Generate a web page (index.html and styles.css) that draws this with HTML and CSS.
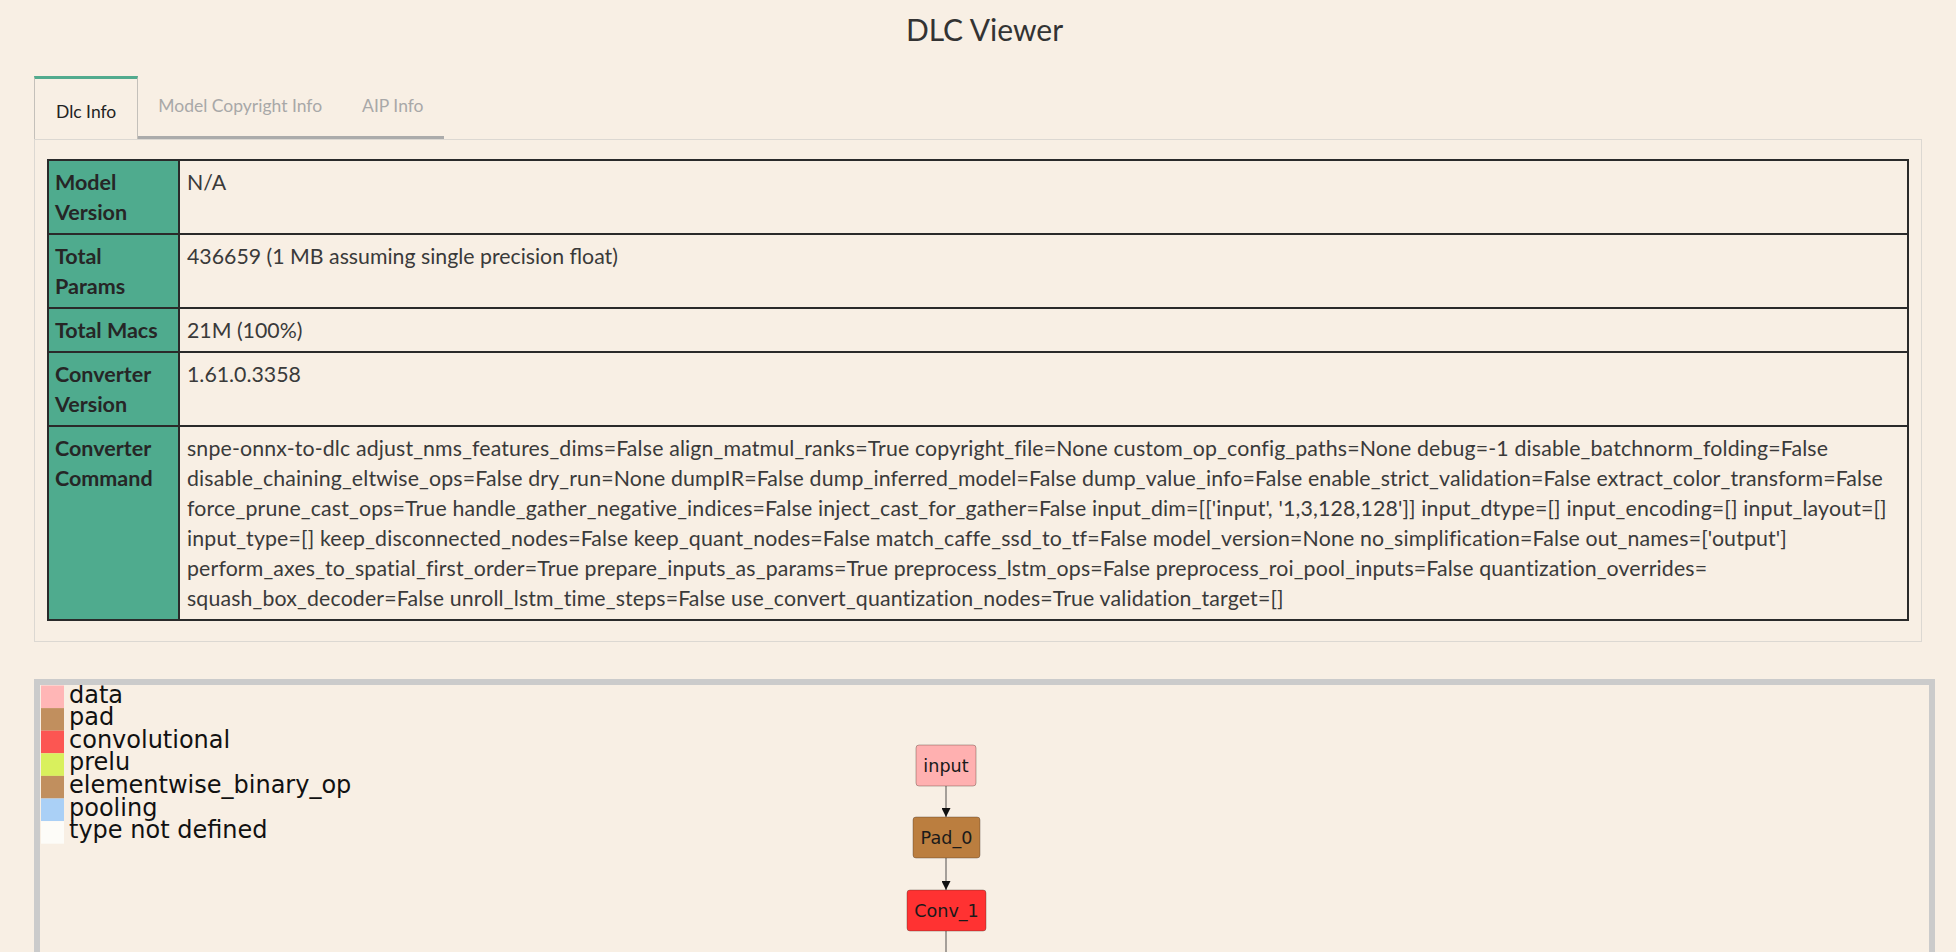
FILE: index.html
```html
<!DOCTYPE html>
<html lang="en">
<head>
<meta charset="utf-8">
<title>DLC Viewer</title>
<link rel="stylesheet" href="styles.css">
</head>
<body>
<div class="page">
  <h1 class="title">DLC Viewer</h1>
  <div class="info">
    <div class="tabs">
      <div class="tab tab-active">Dlc Info</div>
      <div class="tab">Model Copyright Info</div>
      <div class="tab">AIP Info</div>
    </div>
    <div class="panel">
      <table class="info-table">
        <colgroup><col class="col-head"><col></colgroup>
        <tr><th>Model Version</th><td>N/A</td></tr>
        <tr><th>Total Params</th><td>436659 (1 MB assuming single precision float)</td></tr>
        <tr><th>Total Macs</th><td>21M (100%)</td></tr>
        <tr><th>Converter Version</th><td>1.61.0.3358</td></tr>
        <tr><th>Converter Command</th><td class="cmd">snpe-onnx-to-dlc adjust_nms_features_dims=False align_matmul_ranks=True copyright_file=None custom_op_config_paths=None debug=-1 disable_batchnorm_folding=False<br>disable_chaining_eltwise_ops=False dry_run=None dumpIR=False dump_inferred_model=False dump_value_info=False enable_strict_validation=False extract_color_transform=False<br>force_prune_cast_ops=True handle_gather_negative_indices=False inject_cast_for_gather=False input_dim=[['input', '1,3,128,128']] input_dtype=[] input_encoding=[] input_layout=[]<br>input_type=[] keep_disconnected_nodes=False keep_quant_nodes=False match_caffe_ssd_to_tf=False model_version=None no_simplification=False out_names=['output']<br>perform_axes_to_spatial_first_order=True prepare_inputs_as_params=True preprocess_lstm_ops=False preprocess_roi_pool_inputs=False quantization_overrides=<br>squash_box_decoder=False unroll_lstm_time_steps=False use_convert_quantization_nodes=True validation_target=[]</td></tr>
      </table>
    </div>
  </div>
  <div class="graph">
    <svg class="graph-svg" width="1889" height="700" viewBox="0 0 1889 700">
      <defs>
        <marker id="arrow" viewBox="0 0 10 10" refX="10" refY="5" markerWidth="6" markerHeight="6" orient="auto">
          <path d="M0,0 L10,5 L0,10 z" fill="#111"/>
        </marker>
      </defs>
      <g class="legend">
        <rect x="1" y="0.5" width="23" height="22.6" fill="#ffb6b6"/>
        <text x="29" y="17.5">data</text>
        <rect x="1" y="23.1" width="23" height="22.6" fill="#c18f5e"/>
        <text x="29" y="40.1">pad</text>
        <rect x="1" y="45.7" width="23" height="22.6" fill="#fc5652"/>
        <text x="29" y="62.7">convolutional</text>
        <rect x="1" y="68.3" width="23" height="22.6" fill="#d9f05d"/>
        <text x="29" y="85.3">prelu</text>
        <rect x="1" y="90.9" width="23" height="22.6" fill="#c18f5e"/>
        <text x="29" y="107.9">elementwise_binary_op</text>
        <rect x="1" y="113.5" width="23" height="22.6" fill="#aad0f6"/>
        <text x="29" y="130.5">pooling</text>
        <rect x="1" y="136.1" width="23" height="22.6" fill="#fdfcf8"/>
        <text x="29" y="153.1">type not defined</text>
      </g>
      <g class="edges">
        <line x1="906" y1="101" x2="906" y2="132" marker-end="url(#arrow)"/>
        <line x1="906" y1="173" x2="906" y2="205" marker-end="url(#arrow)"/>
        <line x1="906" y1="246" x2="906" y2="290"/>
      </g>
      <g class="nodes">
        <rect x="876" y="60" width="60" height="41" rx="3" fill="#ffb0b0"/>
        <text x="906" y="86.5">input</text>
        <rect x="873" y="132" width="67" height="41" rx="3" fill="#bb7e3f"/>
        <text x="906.5" y="158.5">Pad_0</text>
        <rect x="867" y="205" width="79" height="41" rx="3" fill="#ff3232"/>
        <text x="906.5" y="231.5">Conv_1</text>
      </g>
    </svg>
  </div>
</div>
</body>
</html>
```

FILE: styles.css
```css
html, body {
  margin: 0;
  padding: 0;
  background: #f8efe4;
}

body {
  font-family: Lato, "Liberation Sans", sans-serif;
  color: #333;
}

.page {
  padding: 0 21px 40px 34px;
}

.title {
  margin: 0;
  height: 58px;
  line-height: 58px;
  text-align: center;
  font-size: 30px;
  font-weight: 400;
  color: #333;
}

.info {
  margin-top: 18px;
  margin-right: 13px;
}

.tabs {
  display: flex;
  align-items: flex-end;
}

.tab {
  box-sizing: border-box;
  height: 63px;
  line-height: 60px;
  padding: 0 20px;
  font-size: 17.5px;
  color: #a8a8a8;
  border-bottom: 3px solid #ababab;
}

.tab-active {
  color: #222;
  padding: 0 21px;
  line-height: 66px;
  border: 1px solid #c4c0ba;
  border-top: 3px solid #52ab8e;
  border-bottom: none;
}

.panel {
  border: 1.5px solid #dcd8d2;
  padding: 19px 12px 20px 12px;
}

.info-table {
  width: 100%;
  border-collapse: collapse;
  table-layout: fixed;
  border: 2px solid #2a2a2a;
  font-size: 21.3px;
  line-height: 30px;
}

.col-head {
  width: 131px;
}

.info-table th,
.info-table td {
  border: 2px solid #2a2a2a;
  vertical-align: top;
  text-align: left;
  padding: 6px 7px;
}

.info-table th {
  background: #4fab8e;
  color: #262626;
  font-weight: 700;
  font-size: 21.5px;
  padding-left: 6px;
  padding-right: 10px;
}

.info-table td {
  color: #3a3a3a;
}

.cmd {
  white-space: nowrap;
  letter-spacing: 0.15px;
}

.graph {
  margin-top: 37px;
  border: 6px solid #cbcbcb;
  height: 700px;
  overflow: hidden;
}

.graph-svg {
  display: block;
}

.legend text {
  font-family: "DejaVu Sans", sans-serif;
  font-size: 24px;
  fill: #111;
}

.edges line {
  stroke: #8a8580;
  stroke-width: 1.5;
}

.nodes rect {
  stroke: rgba(60, 40, 30, 0.35);
  stroke-width: 1;
}

.nodes text {
  font-family: "DejaVu Sans", sans-serif;
  font-size: 17.6px;
  text-anchor: middle;
  fill: #1a1a1a;
}
```
